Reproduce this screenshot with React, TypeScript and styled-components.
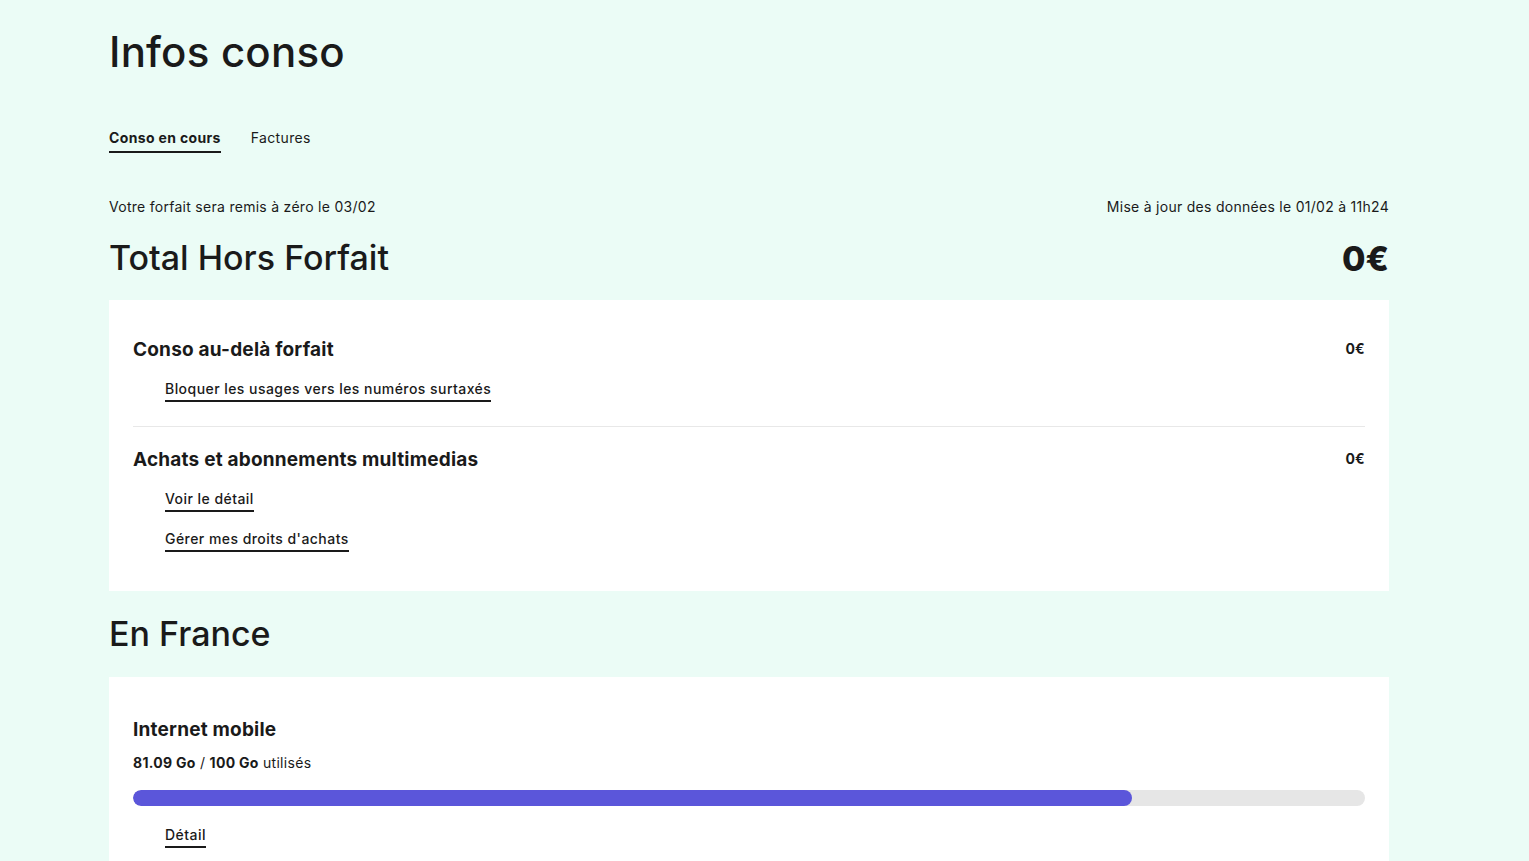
import styled, { createGlobalStyle } from 'styled-components';

const GlobalStyle = createGlobalStyle`
  html, body {
    margin: 0;
    padding: 0;
    background: #ebfcf6;
  }
  body {
    font-family: Inter, "Liberation Sans", sans-serif;
    color: #1a1a1a;
  }
`;

const Page = styled.main`
  width: 1280px;
  margin-left: 109px;
  padding-top: 28px;
`;

const Title = styled.h1`
  margin: 0;
  font-size: 42px;
  line-height: 48px;
  font-weight: 500;
  letter-spacing: 0.2px;
`;

const Tabs = styled.nav`
  display: flex;
  gap: 30px;
  margin-top: 52px;
`;

const Tab = styled.a<{ $active?: boolean }>`
  font-size: 14px;
  line-height: 20px;
  padding-bottom: 3px;
  letter-spacing: 0.35px;
  font-weight: ${(p) => (p.$active ? 700 : 400)};
  border-bottom: 2px solid ${(p) => (p.$active ? '#1a1a1a' : 'transparent')};
  color: #1a1a1a;
`;

const InfoRow = styled.div`
  display: flex;
  justify-content: space-between;
  margin-top: 44px;
  font-size: 14px;
  line-height: 20px;
  letter-spacing: 0.28px;
`;

const TotalRow = styled.div`
  display: flex;
  justify-content: space-between;
  align-items: center;
  margin-top: 20px;
  height: 42px;
`;

const SectionTitle = styled.h2`
  margin: 0;
  font-size: 34px;
  line-height: 42px;
  font-weight: 500;
`;

const BigAmount = styled.span`
  font-size: 34px;
  font-weight: 800;
`;

const Card = styled.section`
  background: #fff;
  padding: 24px 24px 0;
  margin-top: 21px;
`;

const Block = styled.div<{ $last?: boolean }>`
  padding: 13px 0 ${(p) => (p.$last ? '39px' : '24px')};
  border-bottom: ${(p) => (p.$last ? 'none' : '1px solid #e8e8e8')};
  & + & {
    padding-top: 20px;
  }
`;

const BlockHead = styled.div`
  display: flex;
  justify-content: space-between;
  align-items: flex-start;
`;

const BlockTitle = styled.h3`
  margin: 0;
  font-size: 19px;
  line-height: 26px;
  font-weight: 700;
  letter-spacing: 0.2px;
`;

const Amount = styled.span`
  font-size: 14px;
  font-weight: 700;
  line-height: 24px;
  letter-spacing: 0.3px;
`;

const Links = styled.div`
  display: flex;
  flex-direction: column;
  align-items: flex-start;
  gap: 17px;
  padding-left: 32px;
  margin-top: 16px;
`;

const TextLink = styled.a`
  font-size: 14px;
  line-height: 20px;
  font-weight: 500;
  letter-spacing: 0.45px;
  color: #1a1a1a;
  text-decoration: none;
  border-bottom: 2px solid #1a1a1a;
  padding-bottom: 1px;
`;

const FranceTitle = styled(SectionTitle)`
  margin-top: 22px;
`;

const UsageCard = styled(Card)`
  margin-top: 22px;
  padding-top: 40px;
  padding-bottom: 20px;
`;

const Usage = styled.div`
  font-size: 14px;
  line-height: 20px;
  margin-top: 10px;
  letter-spacing: 0.3px;
  b {
    font-weight: 700;
  }
`;

const Track = styled.div`
  height: 16px;
  border-radius: 8px;
  background: #e6e6e6;
  margin-top: 17px;
  overflow: hidden;
`;

const Fill = styled.div`
  height: 100%;
  border-radius: 8px;
  background: #5b56da;
`;

const DetailLinks = styled(Links)`
  margin-top: 19px;
`;

const used = 81.09;
const total = 100;

export default function App() {
  return (
    <>
      <GlobalStyle />
      <Page>
        <Title>Infos conso</Title>
        <Tabs>
          <Tab $active>Conso en cours</Tab>
          <Tab>Factures</Tab>
        </Tabs>
        <InfoRow>
          <span>Votre forfait sera remis à zéro le 03/02</span>
          <span>Mise à jour des données le 01/02 à 11h24</span>
        </InfoRow>
        <TotalRow>
          <SectionTitle>Total Hors Forfait</SectionTitle>
          <BigAmount>0€</BigAmount>
        </TotalRow>
        <Card>
          <Block>
            <BlockHead>
              <BlockTitle>Conso au-delà forfait</BlockTitle>
              <Amount>0€</Amount>
            </BlockHead>
            <Links>
              <TextLink>Bloquer les usages vers les numéros surtaxés</TextLink>
            </Links>
          </Block>
          <Block $last>
            <BlockHead>
              <BlockTitle>Achats et abonnements multimedias</BlockTitle>
              <Amount>0€</Amount>
            </BlockHead>
            <Links>
              <TextLink>Voir le détail</TextLink>
              <TextLink>Gérer mes droits d'achats</TextLink>
            </Links>
          </Block>
        </Card>
        <FranceTitle>En France</FranceTitle>
        <UsageCard>
          <BlockTitle>Internet mobile</BlockTitle>
          <Usage>
            <b>81.09 Go</b> / <b>100 Go</b> utilisés
          </Usage>
          <Track>
            <Fill style={{ width: `${(used / total) * 100}%` }} />
          </Track>
          <DetailLinks>
            <TextLink>Détail</TextLink>
          </DetailLinks>
        </UsageCard>
      </Page>
    </>
  );
}
